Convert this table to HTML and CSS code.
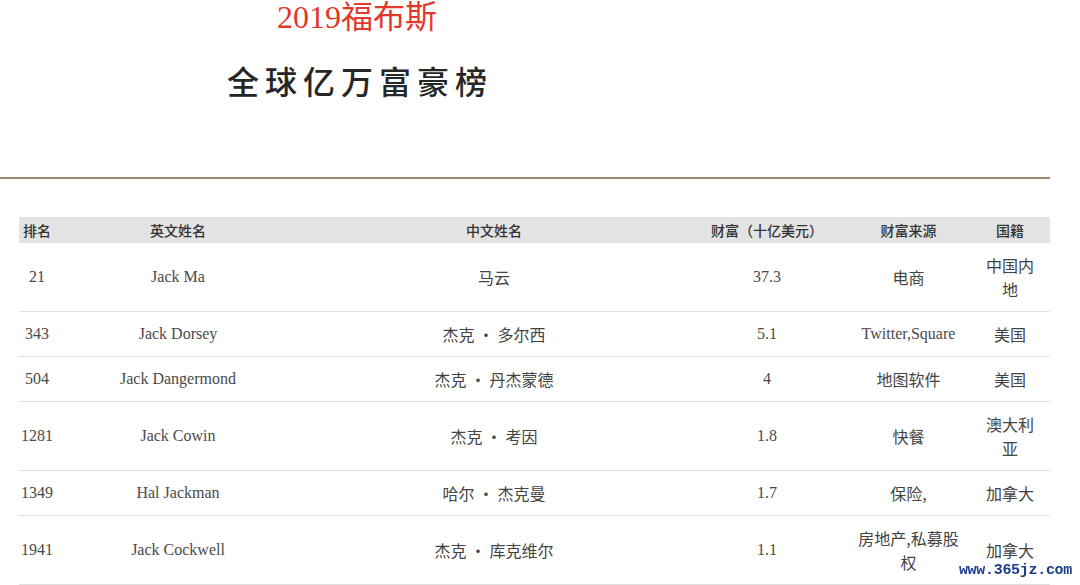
FILE: index.html
```html
<!DOCTYPE html>
<html lang="zh-CN">
<head>
<meta charset="utf-8">
<title>2019福布斯 全球亿万富豪榜</title>
<link rel="stylesheet" href="styles.css">
</head>
<body>
<header class="hero">
  <h1 class="hero-year">2019福布斯</h1>
  <h2 class="hero-title">全球亿万富豪榜</h2>
</header>
<hr class="rule">
<table class="rich">
  <colgroup>
    <col class="c-rank">
    <col class="c-en">
    <col class="c-cn">
    <col class="c-worth">
    <col class="c-src">
    <col class="c-nat">
  </colgroup>
  <thead>
    <tr>
      <th>排名</th>
      <th>英文姓名</th>
      <th>中文姓名</th>
      <th>财富（十亿美元）</th>
      <th>财富来源</th>
      <th>国籍</th>
    </tr>
  </thead>
  <tbody>
    <tr>
      <td class="num">21</td>
      <td class="en">Jack Ma</td>
      <td>马云</td>
      <td class="num">37.3</td>
      <td>电商</td>
      <td class="nat">中国内地</td>
    </tr>
    <tr>
      <td class="num">343</td>
      <td class="en">Jack Dorsey</td>
      <td>杰克 · 多尔西</td>
      <td class="num">5.1</td>
      <td class="en">Twitter,Square</td>
      <td class="nat">美国</td>
    </tr>
    <tr>
      <td class="num">504</td>
      <td class="en">Jack Dangermond</td>
      <td>杰克 · 丹杰蒙德</td>
      <td class="num">4</td>
      <td>地图软件</td>
      <td class="nat">美国</td>
    </tr>
    <tr>
      <td class="num">1281</td>
      <td class="en">Jack Cowin</td>
      <td>杰克 · 考因</td>
      <td class="num">1.8</td>
      <td>快餐</td>
      <td class="nat">澳大利亚</td>
    </tr>
    <tr>
      <td class="num">1349</td>
      <td class="en">Hal Jackman</td>
      <td>哈尔 · 杰克曼</td>
      <td class="num">1.7</td>
      <td>保险,</td>
      <td class="nat">加拿大</td>
    </tr>
    <tr>
      <td class="num">1941</td>
      <td class="en">Jack Cockwell</td>
      <td>杰克 · 库克维尔</td>
      <td class="num">1.1</td>
      <td>房地产,私募股权</td>
      <td class="nat">加拿大</td>
    </tr>
  </tbody>
</table>
<div class="watermark">www.365jz.com</div>
</body>
</html>
```

FILE: styles.css
```css
html, body {
  margin: 0;
  padding: 0;
  background: #ffffff;
}

body {
  font-family: "Liberation Serif", "Noto Sans CJK SC", serif;
  color: #444;
}

.hero {
  width: 714px;
  text-align: center;
}

.hero-year {
  position: relative;
  top: -1px;
  margin: 0;
  font-family: "Liberation Serif", "Noto Sans CJK SC", serif;
  font-size: 32px;
  line-height: 36px;
  font-weight: 400;
  color: #e2392c;
}

.hero-title {
  margin: 28px 0 0;
  padding-left: 6px;
  font-family: "Noto Sans CJK SC", sans-serif;
  font-size: 32px;
  line-height: 32px;
  font-weight: 500;
  letter-spacing: 6px;
  color: #262626;
}

.rule {
  width: 1050px;
  height: 2px;
  margin: 81px 0 0;
  border: 0;
  background: #9a886a;
}

.rich {
  margin: 38px 0 0 19px;
  width: 1031px;
  border-collapse: collapse;
  table-layout: fixed;
  font-size: 16px;
}

.c-rank { width: 36px; }
.c-en { width: 246px; }
.c-cn { width: 386px; }
.c-worth { width: 160px; }
.c-src { width: 123px; }
.c-nat { width: 80px; }

.rich th {
  height: 26px;
  padding: 0;
  background: #e3e3e3;
  font-family: "Noto Sans CJK SC", sans-serif;
  font-size: 14px;
  line-height: 26px;
  font-weight: 500;
  color: #333;
  text-align: center;
}

.rich td {
  padding: 10px 6px;
  border-bottom: 1px solid #e0e0e0;
  font-family: "Noto Sans CJK SC", sans-serif;
  line-height: 24px;
  text-align: center;
  color: #444;
}

.rich td:first-child {
  padding-left: 0;
  padding-right: 0;
}

.rich td.num,
.rich td.en {
  font-family: "Liberation Serif", serif;
  color: #4a4a4a;
}

.rich td.nat {
  padding-left: 13px;
  padding-right: 13px;
}

.watermark {
  position: fixed;
  right: 8px;
  bottom: 4px;
  font-family: "Liberation Mono", monospace;
  font-size: 15px;
  line-height: 20px;
  font-weight: 700;
  color: #1b3d8c;
  letter-spacing: -0.3px;
}
```
